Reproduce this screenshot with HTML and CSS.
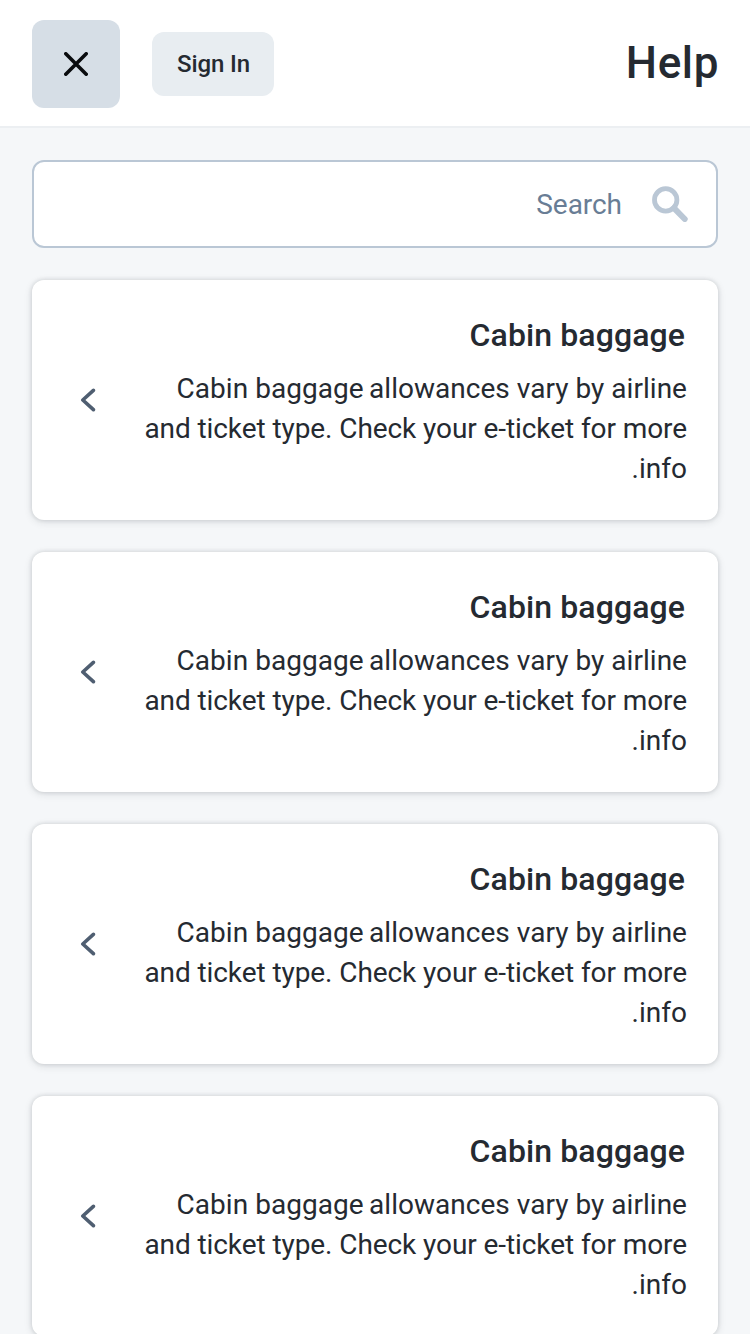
FILE: index.html
```html
<!DOCTYPE html>
<html lang="en" dir="rtl">
<head>
<meta charset="utf-8">
<title>Help</title>
<link rel="stylesheet" href="styles.css">
</head>
<body>
<header class="header">
  <h1 class="title">Help</h1>
  <button class="sign-in">Sign In</button>
  <button class="close" aria-label="Close"><svg width="24" height="24" viewBox="0 0 24 24"><path d="M1.8 1.8 22.2 22.2M22.2 1.8 1.8 22.2" fill="none" stroke="#090b0e" stroke-width="3.6" stroke-linecap="round"/></svg></button>
</header>
<main class="content">
  <div class="search">
    <svg class="search-icon" width="36" height="36" viewBox="0 0 36 36" fill="none" stroke="#bac7d5" stroke-width="4.8"><circle cx="13.7" cy="13.9" r="11.2"/><path d="M22 22.2 32.7 33" stroke-width="6" stroke-linecap="round"/></svg>
    <span class="placeholder">Search</span>
  </div>
  <article class="card">
    <div class="card-text"><h2 class="card-title">Cabin baggage</h2><p class="card-body">Cabin baggage<span class="narrow"> </span>allowances vary by airline <span class="tight">and ticket type. Check your e-ticket for more</span> info.</p></div>
    <svg class="chevron" width="16" height="24" viewBox="0 0 16 24"><path d="M13.4 2.3 2.8 12 13.4 21.7" fill="none" stroke="#4f5e71" stroke-width="3.6" stroke-linecap="round" stroke-linejoin="round"/></svg>
  </article>
  <article class="card">
    <div class="card-text"><h2 class="card-title">Cabin baggage</h2><p class="card-body">Cabin baggage<span class="narrow"> </span>allowances vary by airline <span class="tight">and ticket type. Check your e-ticket for more</span> info.</p></div>
    <svg class="chevron" width="16" height="24" viewBox="0 0 16 24"><path d="M13.4 2.3 2.8 12 13.4 21.7" fill="none" stroke="#4f5e71" stroke-width="3.6" stroke-linecap="round" stroke-linejoin="round"/></svg>
  </article>
  <article class="card">
    <div class="card-text"><h2 class="card-title">Cabin baggage</h2><p class="card-body">Cabin baggage<span class="narrow"> </span>allowances vary by airline <span class="tight">and ticket type. Check your e-ticket for more</span> info.</p></div>
    <svg class="chevron" width="16" height="24" viewBox="0 0 16 24"><path d="M13.4 2.3 2.8 12 13.4 21.7" fill="none" stroke="#4f5e71" stroke-width="3.6" stroke-linecap="round" stroke-linejoin="round"/></svg>
  </article>
  <article class="card">
    <div class="card-text"><h2 class="card-title">Cabin baggage</h2><p class="card-body">Cabin baggage<span class="narrow"> </span>allowances vary by airline <span class="tight">and ticket type. Check your e-ticket for more</span> info.</p></div>
    <svg class="chevron" width="16" height="24" viewBox="0 0 16 24"><path d="M13.4 2.3 2.8 12 13.4 21.7" fill="none" stroke="#4f5e71" stroke-width="3.6" stroke-linecap="round" stroke-linejoin="round"/></svg>
  </article>
</main>
</body>
</html>
```
FILE: styles.css
```css
* { box-sizing: border-box; }
body { margin: 0; height: 1334px; overflow: hidden; background: #f5f7f9; color: #252a31; font-family: Roboto, sans-serif; }
.header { display: flex; align-items: flex-start; height: 128px; padding: 20px 31px 0 32px; background: #fff; border-bottom: 2px solid #eceff2; }
.title { margin: 17px 0 0; margin-inline-end: auto; font-size: 44px; line-height: 52px; font-weight: 500; letter-spacing: .6px; }
.sign-in { width: 122px; height: 64px; margin-top: 12px; padding: 0 0 0 1px; border: 0; border-radius: 12px; background: #e8edf1; color: #252a31; font: 500 24px/28px Roboto, sans-serif; letter-spacing: -.1px; }
.close { display: flex; align-items: center; justify-content: center; width: 88px; height: 88px; margin-inline-start: 32px; padding: 0; border: 0; border-radius: 12px; background: #d6dee6; }
.content { display: flex; flex-direction: column; gap: 32px; padding: 32px; }
.search { display: flex; align-items: center; flex: none; height: 88px; padding: 0 28px; border: 2px solid #bac7d5; border-radius: 12px; background: #fff; }
.placeholder { margin-inline-start: 30px; padding-top: 2px; font-size: 28px; line-height: 40px; letter-spacing: -.05px; color: #697d95; }
.card { display: flex; align-items: center; justify-content: space-between; flex: none; height: 240px; padding: 0 31px 0 48px; border-radius: 12px; background: #fff; box-shadow: 0 0 4px rgba(37,42,49,.16), 0 2px 8px rgba(37,42,49,.12); }
.card-text { width: 550px; padding-top: 3px; }
.card-title { margin: 0 0 13px; padding-right: 2px; font-size: 32px; line-height: 40px; font-weight: 500; letter-spacing: .1px; }
.card-body { margin: 0 0 -1px; padding-top: 1px; font-size: 28px; line-height: 40px; letter-spacing: .03px; }
.narrow { letter-spacing: -1.5px; }
.tight { letter-spacing: -.08px; }
```
